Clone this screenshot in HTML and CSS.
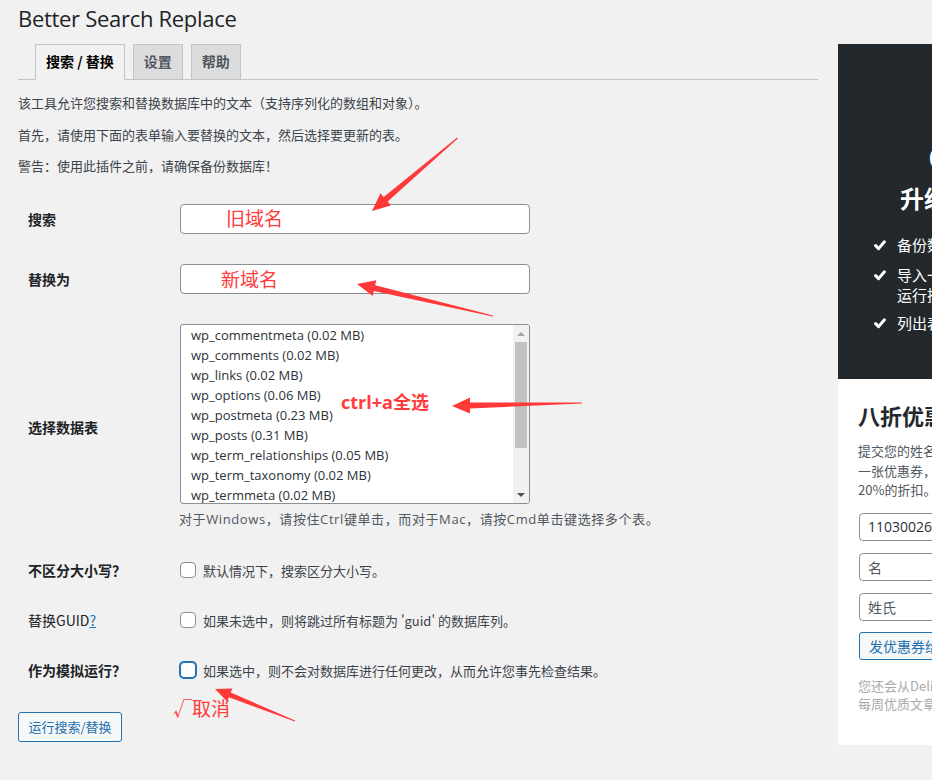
FILE: index.html
```html
<!DOCTYPE html>
<html lang="zh-CN">
<head>
<meta charset="utf-8">
<title>Better Search Replace</title>
<link rel="stylesheet" href="styles.css">
</head>
<body>
<div class="page">
  <h1 class="title">Better Search Replace</h1>
  <div class="cols">
    <div class="main">
      <nav class="tabs">
        <span class="tab active">搜索 / 替换</span>
        <span class="tab">设置</span>
        <span class="tab">帮助</span>
      </nav>
      <p class="intro first">该工具允许您搜索和替换数据库中的文本（支持序列化的数组和对象）。</p>
      <p class="intro">首先，请使用下面的表单输入要替换的文本，然后选择要更新的表。</p>
      <p class="intro">警告：使用此插件之前，请确保备份数据库！</p>

      <div class="form">
        <div class="row row-text">
          <div class="th">搜索</div>
          <div class="td"><div class="input"></div></div>
        </div>
        <div class="row row-text">
          <div class="th">替换为</div>
          <div class="td"><div class="input"></div></div>
        </div>
        <div class="row row-select">
          <div class="th">选择数据表</div>
          <div class="td">
            <div class="select">
              <div class="options">
                <div>wp_commentmeta (0.02 MB)</div>
                <div>wp_comments (0.02 MB)</div>
                <div>wp_links (0.02 MB)</div>
                <div>wp_options (0.06 MB)</div>
                <div>wp_postmeta (0.23 MB)</div>
                <div>wp_posts (0.31 MB)</div>
                <div>wp_term_relationships (0.05 MB)</div>
                <div>wp_term_taxonomy (0.02 MB)</div>
                <div>wp_termmeta (0.02 MB)</div>
              </div>
              <div class="sb">
                <div class="sb-btn"><span class="tri-up"></span></div>
                <div class="sb-track"><div class="sb-thumb"></div></div>
                <div class="sb-btn"><span class="tri-down"></span></div>
              </div>
            </div>
            <div class="desc">对于Windows，请按住Ctrl键单击，而对于Mac，请按Cmd单击键选择多个表。</div>
          </div>
        </div>
        <div class="row row-check">
          <div class="th">不区分大小写？</div>
          <div class="td check"><span class="cb"></span><span class="cbtext">默认情况下，搜索区分大小写。</span></div>
        </div>
        <div class="row row-check">
          <div class="th th-light">替换GUID<a class="help" href="#">?</a></div>
          <div class="td check"><span class="cb"></span><span class="cbtext">如果未选中，则将跳过所有标题为 'guid' 的数据库列。</span></div>
        </div>
        <div class="row row-check">
          <div class="th">作为模拟运行？</div>
          <div class="td check"><span class="cb focus"></span><span class="cbtext">如果选中，则不会对数据库进行任何更改，从而允许您事先检查结果。</span></div>
        </div>
      </div>
      <button class="btn">运行搜索/替换</button>
    </div>

    <aside class="side">
      <div class="promo">
        <div class="promo-big">GO PRO</div>
        <div class="promo-h">升级到专业版</div>
        <ul class="promo-list">
          <li><svg class="tick" viewBox="0 0 12 11" width="12" height="11"><path d="M1.6 5.6 L4.6 8.6 L10.4 1.8" fill="none" stroke="#fff" stroke-width="3" stroke-linecap="round" stroke-linejoin="round"/></svg><span>备份数据库</span></li>
          <li><svg class="tick" viewBox="0 0 12 11" width="12" height="11"><path d="M1.6 5.6 L4.6 8.6 L10.4 1.8" fill="none" stroke="#fff" stroke-width="3" stroke-linecap="round" stroke-linejoin="round"/></svg><span>导入一个数据库<br>运行搜索替换</span></li>
          <li><svg class="tick" viewBox="0 0 12 11" width="12" height="11"><path d="M1.6 5.6 L4.6 8.6 L10.4 1.8" fill="none" stroke="#fff" stroke-width="3" stroke-linecap="round" stroke-linejoin="round"/></svg><span>列出表格</span></li>
        </ul>
      </div>
      <div class="coupon">
        <h2>八折优惠券</h2>
        <p>提交您的姓名和电子邮件，我们将向您发送<br>一张优惠券，该优惠券可让您享受<br>20%的折扣。</p>
        <div class="field first">1103002600@qq.com</div>
        <div class="field ph">名</div>
        <div class="field ph">姓氏</div>
        <div class="cbtn">发优惠券给我</div>
        <div class="foot">您还会从Delicious Brains收到<br>每周优质文章和技巧</div>
      </div>
    </aside>
  </div>
</div>

<div class="notes">
  <svg width="932" height="780" viewBox="0 0 932 780">
    <polygon class="arrow" points="457.8,138.4 387.7,201.6 390.9,205.4 372,211 380.5,193.2 383.7,197 457.2,137.6"/>
    <polygon class="arrow" points="493.1,315.5 375.2,285.2 376.3,280.3 357,284 372.7,295.9 373.8,291 492.9,316.5"/>
    <polygon class="arrow" points="582,402.6 470,402.6 470,397.6 452,406 470,413.6 470,408.6 582,403.4"/>
    <polygon class="arrow" points="295.1,720.6 230.7,692.6 232.4,688.4 215,689 227.2,701.4 228.9,697.2 294.9,721.4"/>
  </svg>
  <span class="note n1">旧域名</span>
  <span class="note n2">新域名</span>
  <span class="note n3">ctrl+a全选</span>
  <span class="note n4">√取消</span>
</div>
</body>
</html>
```

FILE: styles.css
```css
* { box-sizing: border-box; }

html, body {
  margin: 0;
  width: 932px;
  height: 780px;
  overflow: hidden;
}

body {
  position: relative;
  background: #f1f1f1;
  font-family: "Noto Sans CJK SC", "Open Sans", sans-serif;
  font-size: 13px;
  color: #3c434a;
}

.page { padding-left: 18px; }

.title {
  margin: 0;
  height: 44px;
  padding-top: 3px;
  font-family: "Open Sans", "Noto Sans CJK SC", sans-serif;
  font-size: 22px;
  letter-spacing: -0.3px;
  font-weight: 400;
  line-height: 30px;
  color: #1d2327;
}

.cols {
  display: flex;
  align-items: flex-start;
  gap: 20px;
}

.main { width: 800px; flex: none; }
.side { width: 268px; flex: none; }

/* tabs */
.tabs {
  display: flex;
  align-items: flex-end;
  gap: 8px;
  height: 36px;
  padding-left: 17px;
  border-bottom: 1px solid #c3c4c7;
}

.tab {
  height: 35px;
  padding: 0 10px;
  border: 1px solid #c3c4c7;
  border-bottom: none;
  background: #dcdcde;
  color: #50575e;
  font-size: 14px;
  font-weight: 700;
  line-height: 33px;
}

.tab.active {
  height: 36px;
  margin-bottom: -1px;
  background: #f1f1f1;
  color: #000;
  position: relative;
  padding: 0 10px;
}

.intro {
  margin: 11.5px 0 0;
  line-height: 20px;
  font-size: 13px;
  color: #3c434a;
}
.intro.first { margin-top: 13px; }

/* form */
.form { margin-top: 13px; }

.row { display: flex; align-items: center; }

.th {
  width: 162px;
  flex: none;
  padding-left: 10px;
  font-size: 14px;
  font-weight: 700;
  color: #1d2327;
}
.th-light { font-weight: 400; }

.help {
  color: #2271b1;
  text-decoration: underline;
  font-weight: 400;
}

.row-text { height: 60px; }
.row-select { padding: 15px 0 16px; }
.row-check { height: 50px; }

.input {
  width: 350px;
  height: 30px;
  border: 1px solid #8c8f94;
  border-radius: 4px;
  background: #fff;
}

.select {
  width: 350px;
  height: 180px;
  border: 1px solid #8c8f94;
  border-radius: 3px;
  background: #fff;
  display: flex;
  overflow: hidden;
}

.options {
  flex: 1;
  padding-left: 10px;
  overflow: hidden;
  color: #2c3338;
  font-family: "Open Sans", "Noto Sans CJK SC", sans-serif;
  font-size: 13px;
}
.options div { line-height: 20px; white-space: nowrap; }

.sb {
  width: 16px;
  flex: none;
  display: flex;
  flex-direction: column;
  background: #f1f1f1;
}
.sb-btn {
  height: 17px;
  display: flex;
  align-items: center;
  justify-content: center;
}
.sb-track { flex: 1; padding: 0 2px; }
.sb-thumb {
  height: 106px;
  background: #c1c1c1;
}
.tri-up {
  width: 0; height: 0;
  border-left: 4px solid transparent;
  border-right: 4px solid transparent;
  border-bottom: 4px solid #a3a3a3;
}
.tri-down {
  width: 0; height: 0;
  border-left: 4px solid transparent;
  border-right: 4px solid transparent;
  border-top: 4px solid #505050;
}

.desc {
  margin-top: 5px;
  line-height: 20px;
  font-family: "Open Sans", "Noto Sans CJK SC", sans-serif;
  font-size: 13px;
  letter-spacing: 0.6px;
  color: #50575e;
  white-space: nowrap;
  margin-left: -1px;
}

.check { display: flex; align-items: center; }
.cb {
  width: 16px;
  height: 16px;
  flex: none;
  margin-right: 7px;
  border: 1px solid #8c8f94;
  border-radius: 4px;
  background: #fff;
}
.cb.focus {
  border-color: #2271b1;
  box-shadow: 0 0 0 1px #2271b1;
}
.cbtext { font-size: 13px; color: #3c434a; white-space: nowrap; }

.btn {
  margin-top: 17px;
  width: 104px;
  height: 30px;
  padding: 0;
  border: 1px solid #2271b1;
  border-radius: 3px;
  background: #f6f7f7;
  color: #2271b1;
  font-family: inherit;
  font-size: 13px;
  line-height: 28px;
}

/* sidebar */
.promo {
  height: 335px;
  padding-top: 93px;
  background: #23282d;
  color: #fff;
  white-space: nowrap;
}
.promo-big {
  padding-left: 90px;
  font-family: "Open Sans", sans-serif;
  font-size: 34px;
  font-weight: 700;
  line-height: 40px;
}
.promo-h {
  margin-top: 3px;
  padding-left: 62px;
  font-size: 24px;
  font-weight: 700;
  line-height: 36px;
}
.promo-list {
  list-style: none;
  margin: 19px 0 0;
  padding: 0 0 0 36px;
}
.promo-list li {
  display: flex;
  align-items: flex-start;
  font-size: 15px;
  line-height: 20px;
  margin-bottom: 10px;
}
.promo-list li:nth-child(2) { margin-bottom: 8px; }
.tick { flex: none; margin: 5px 11px 0 0; }

.coupon {
  height: 366px;
  padding: 21px 0 0 20px;
  background: #fff;
  white-space: nowrap;
}
.coupon h2 {
  margin: 0;
  font-size: 22px;
  font-weight: 700;
  line-height: 30px;
  color: #23282d;
}
.coupon p {
  margin: 11px 0 0;
  font-size: 13px;
  line-height: 19.5px;
  color: #50575e;
}
.field {
  margin-top: 12px;
  width: 230px;
  height: 28px;
  padding-left: 8px;
  border: 1px solid #8c8f94;
  border-radius: 4px;
  font-size: 14px;
  line-height: 26px;
  color: #2c3338;
  margin-left: 1px;
}
.field.first { margin-top: 13.5px; font-family: "Open Sans", sans-serif; }
.field.ph { color: #50575e; }
.cbtn {
  display: inline-block;
  margin-top: 11px;
  margin-left: 1px;
  height: 28px;
  padding: 0 10px 0 9px;
  border: 1px solid #2271b1;
  border-radius: 3px;
  background: #f6f7f7;
  color: #2271b1;
  font-size: 14px;
  line-height: 26px;
}
.foot {
  margin-top: 17px;
  font-size: 13px;
  line-height: 18px;
  color: #a7aaad;
}

/* annotations laid over the screenshot */
.notes {
  position: absolute;
  left: 0;
  top: 0;
  width: 932px;
  height: 780px;
  pointer-events: none;
}
.notes svg { position: absolute; left: 0; top: 0; }
.arrow { fill: #ff3838; }
.note {
  position: absolute;
  color: #ff3b3b;
  font-family: "Noto Sans CJK SC", sans-serif;
  font-size: 19px;
  line-height: 20px;
  white-space: nowrap;
}
.n1 { left: 226px; top: 208px; }
.n2 { left: 221px; top: 269px; }
.n3 { left: 341px; top: 392px; font-size: 18px; font-weight: 700; font-family: "Open Sans", "Noto Sans CJK SC", sans-serif; }
.n4 { left: 173px; top: 698px; }
```
